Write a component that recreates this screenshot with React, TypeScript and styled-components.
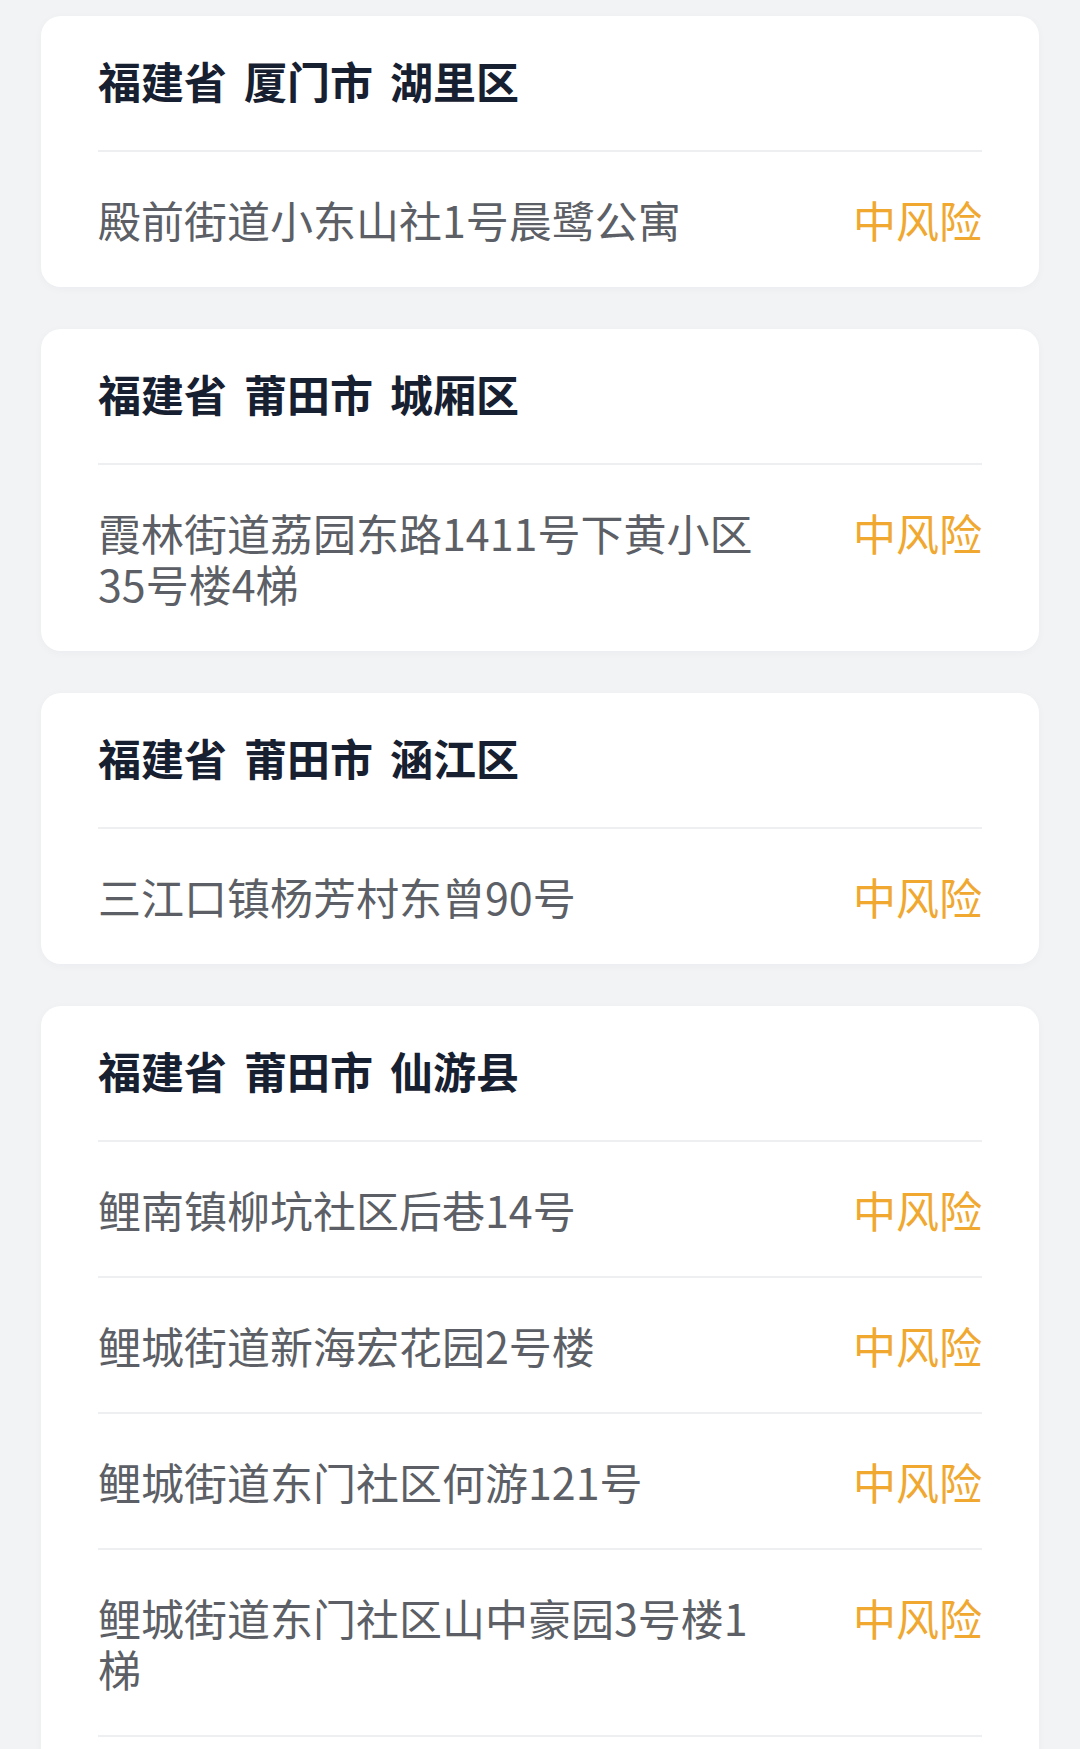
import styled, { createGlobalStyle } from 'styled-components';

const GlobalStyle = createGlobalStyle`
  html, body {
    margin: 0;
    padding: 0;
    background: #f2f3f5;
  }
  body {
    font-family: "Noto Sans CJK SC", "Noto Sans", sans-serif;
  }
`;

const areas = [
  {
    region: ['福建省', '厦门市', '湖里区'],
    places: ['殿前街道小东山社1号晨鹭公寓'],
  },
  {
    region: ['福建省', '莆田市', '城厢区'],
    places: ['霞林街道荔园东路1411号下黄小区35号楼4梯'],
  },
  {
    region: ['福建省', '莆田市', '涵江区'],
    places: ['三江口镇杨芳村东曾90号'],
  },
  {
    region: ['福建省', '莆田市', '仙游县'],
    places: [
      '鲤南镇柳坑社区后巷14号',
      '鲤城街道新海宏花园2号楼',
      '鲤城街道东门社区何游121号',
      '鲤城街道东门社区山中豪园3号楼1梯',
    ],
    more: true,
  },
];

export default function App() {
  return (
    <>
      <GlobalStyle />
      <Page>
        {areas.map((area) => (
          <Card key={area.region.join(' ')} $more={area.more}>
            <Region>
              {area.region.map((part) => (
                <span key={part}>{part}</span>
              ))}
            </Region>
            {area.places.map((place) => (
              <Row key={place}>
                <Place>{place}</Place>
                <Risk>中风险</Risk>
              </Row>
            ))}
          </Card>
        ))}
      </Page>
    </>
  );
}

const Page = styled.div`
  display: flex;
  flex-flow: column;
  gap: 42px;
  padding: 16px 41px 0;
  height: 1749px;
  overflow: hidden;
  box-sizing: border-box;
`;

const Card = styled.div<{ $more?: boolean }>`
  flex: 0 0 auto;
  background: #ffffff;
  border-radius: 20px;
  padding: 0 57px ${(p) => (p.$more ? '80px' : '1px')};
  box-shadow: 0 2px 10px rgba(20, 30, 50, 0.03);

  ${(p) =>
    p.$more &&
    `
    & > div:last-child {
      border-bottom: 2px solid #eeeff1;
    }
  `}
`;

const Region = styled.div`
  height: 134px;
  box-sizing: border-box;
  padding-bottom: 6px;
  display: flex;
  align-items: center;
  gap: 17px;
  font-size: 43px;
  font-weight: 700;
  color: #172030;
`;

const Row = styled.div`
  display: flex;
  justify-content: space-between;
  align-items: flex-start;
  gap: 80px;
  padding: 41.5px 0;
  border-top: 2px solid #eeeff1;
  font-size: 43px;
  line-height: 51px;
`;

const Place = styled.div`
  color: #5c5f66;
  flex: 1;
`;

const Risk = styled.div`
  color: #f0a830;
  flex: 0 0 auto;
`;
